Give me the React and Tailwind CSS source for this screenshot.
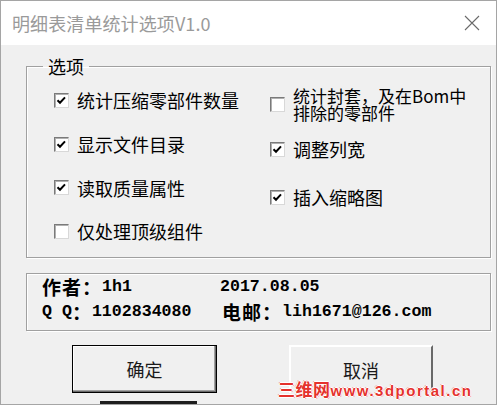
import React from 'react';

const cjk = "font-['Noto_Sans_CJK_SC',sans-serif]";
const mono = "font-['Liberation_Mono','Noto_Sans_CJK_SC',monospace] text-[16.6px]";
const big = 'text-[19px] tracking-[1px]';

function Check({ checked }) {
  return (
    <span className="w-[15px] h-[15px] shrink-0 bg-white border border-t-[#7a7a7a] border-l-[#7a7a7a] border-r-[#d8d8d8] border-b-[#d8d8d8] shadow-[inset_1px_1px_0_#b0b0b0] flex items-center justify-center">
      {checked && (
        <svg width="13" height="13" viewBox="0 0 13 13">
          <path d="M2.5 6.2 L5 8.8 L10 3.4" fill="none" stroke="#000" strokeWidth="2" />
        </svg>
      )}
    </span>
  );
}

function Option({ checked, children, className = '' }) {
  return (
    <div className={`flex items-center gap-[8px] ${className}`}>
      <Check checked={checked} />
      <div className="text-[18px] leading-[18px] text-black">{children}</div>
    </div>
  );
}

function Etched({ className = '', children }) {
  return (
    <div className={`border border-[#a0a0a0] shadow-[inset_1px_1px_0_#fff,1px_1px_0_#fff] ${className}`}>
      {children}
    </div>
  );
}

// one line of the author box; each cell keeps its own row height
function Cell({ children, className = '' }) {
  return <div className={`h-[25px] flex items-center whitespace-nowrap ${className}`}>{children}</div>;
}

export default function App() {
  return (
    <div className={`relative w-[497px] h-[405px] overflow-hidden bg-[#f0f0f0] border border-[#a5a5a5] ${cjk}`}>
      <div className="h-[44px] bg-white flex items-center justify-between pl-[11px] pr-[16px]">
        <span className="text-[18px] text-[#9a9a9a] tracking-[0.1px]">明细表清单统计选项V1.0</span>
        <svg width="16" height="16" viewBox="0 0 16 16">
          <path d="M1 1 L15 15 M15 1 L1 15" stroke="#6a6a6a" strokeWidth="1.1" fill="none" />
        </svg>
      </div>

      <fieldset className="ml-[25px] mt-[12px] w-[465px] h-[201px] border border-[#a0a0a0] shadow-[inset_1px_1px_0_#fff,1px_1px_0_#fff] flex">
        <legend className="ml-[16px] px-[5px] text-[18px] leading-[18px] text-black">选项</legend>
        <div className="flex w-full pt-[3px]">
          <div className="flex flex-col pl-[27px] w-[243px]">
            <Option checked className="h-[44px]">统计压缩零部件数量</Option>
            <Option checked className="h-[44px]">显示文件目录</Option>
            <Option checked className="h-[43px]">读取质量属性</Option>
            <Option className="h-[44px]">仅处理顶级组件</Option>
          </div>
          <div className="flex flex-col">
            <Option className="h-[52px]">
              <div className="text-[17px] leading-[17px]">统计封套，及在Bom中</div>
              <div className="text-[17px] leading-[17px]">排除的零部件</div>
            </Option>
            <Option checked className="h-[38px]">调整列宽</Option>
            <Option checked className="h-[58px]">插入缩略图</Option>
          </div>
        </div>
      </fieldset>

      <Etched className="ml-[25px] mt-[15px] w-[465px] h-[58px] pl-[15px] font-bold text-black leading-[20px]">
        <div className="grid grid-cols-[178px_1fr]">
          <Cell>
            <span className={big}>作者：</span>
            <span className={mono}>1h1</span>
          </Cell>
          <Cell>
            <span className={mono}>2017.08.05</span>
          </Cell>
          <Cell>
            <span className={mono}>Q Q</span>
            <span className={big}>：</span>
            <span className={mono}>1102834080</span>
          </Cell>
          <Cell className="pl-[2px]">
            <span className={big}>电邮：</span>
            <span className={mono}>lih1671@126.com</span>
          </Cell>
        </div>
      </Etched>

      <div className="flex mt-[14px]">
        <button className="ml-[71px] w-[145px] h-[48px] bg-[#f0f0f0] border border-black shadow-[inset_-1px_-1px_0_#696969,inset_-2px_-2px_0_#a0a0a0,inset_1px_1px_0_#fff] text-[18px] text-[#1a1a1a] flex items-center justify-center">
          确定
        </button>
        <button className="ml-[72px] w-[144px] h-[48px] bg-[#f0f0f0] border-t-2 border-l-2 border-t-white border-l-white border-r-2 border-r-[#696969] text-[18px] text-[#1a1a1a] flex items-center justify-center">
          取消
        </button>
      </div>

      <div className="ml-[99px] mt-[8px] w-[97px] h-[6px] bg-[#1e1e1e]" />

      <div className="absolute left-[277px] top-[382px] leading-[16px] font-bold text-[#e5322d] font-['Liberation_Sans','Noto_Sans_CJK_SC',sans-serif] whitespace-nowrap [text-shadow:1px_0_0_#fff,-1px_0_0_#fff,0_1px_0_#fff,0_-1px_0_#fff,1px_1px_0_#f5a0a0,-1px_-1px_0_#f5a0a0]">
        <span className="text-[17px] tracking-[0.5px]">三维网</span>
        <span className="text-[15px] tracking-[1.5px]">www.3dportal.cn</span>
      </div>
    </div>
  );
}
